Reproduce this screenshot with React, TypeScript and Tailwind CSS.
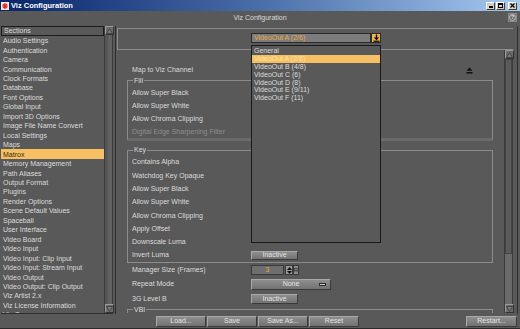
import React from "react";

const sections = [
  "Audio Settings",
  "Authentication",
  "Camera",
  "Communication",
  "Clock Formats",
  "Database",
  "Font Options",
  "Global Input",
  "Import 3D Options",
  "Image File Name Convert",
  "Local Settings",
  "Maps",
  "Matrox",
  "Memory Management",
  "Path Aliases",
  "Output Format",
  "Plugins",
  "Render Options",
  "Scene Default Values",
  "Spaceball",
  "User Interface",
  "Video Board",
  "Video Input",
  "Video Input: Clip Input",
  "Video Input: Stream Input",
  "Video Output",
  "Video Output: Clip Output",
  "Viz Artist 2.x",
  "Viz License Information",
  "Viz One",
];

const channels = [
  "General",
  "VideoOut A (2/6)",
  "VideoOut B (4/8)",
  "VideoOut C (6)",
  "VideoOut D (8)",
  "VideoOut E (9/11)",
  "VideoOut F (11)",
];

const fillRows = ["Allow Super Black", "Allow Super White", "Allow Chroma Clipping"];
const keyRows = [
  "Contains Alpha",
  "Watchdog Key Opaque",
  "Allow Super Black",
  "Allow Super White",
  "Allow Chroma Clipping",
  "Apply Offset",
  "Downscale Luma",
];

function GrayButton({ label, className = "" }: { label: string; className?: string }) {
  return (
    <div
      className={`flex items-center justify-center border border-t-[#a8a8a8] border-l-[#a8a8a8] border-r-[#3a3a3a] border-b-[#3a3a3a] bg-linear-to-b from-[#8e8e8e] to-[#727272] text-[#e4e4e4] ${className}`}
    >
      {label}
    </div>
  );
}

function ArrowBox({ up }: { up: boolean }) {
  return (
    <div className="flex h-[9px] w-[9px] items-center justify-center border border-t-[#9a9a9a] border-l-[#9a9a9a] border-r-[#333] border-b-[#333] bg-[#6c6c6c]">
      <svg width="7" height="6" viewBox="0 0 7 6">
        <polygon
          points={up ? "3.5,0.5 6.5,5.5 0.5,5.5" : "0.5,0.5 6.5,0.5 3.5,5.5"}
          fill="#7a7a7a"
          stroke="#444"
          strokeWidth="1"
        />
      </svg>
    </div>
  );
}

function EjectIcon({ color = "#111" }: { color?: string }) {
  return (
    <svg width="7" height="7" viewBox="0 0 7 7">
      <polygon points="3.5,0.5 6.5,3.8 0.5,3.8" fill={color} />
      <rect x="0.5" y="5" width="6" height="1.5" fill={color} />
    </svg>
  );
}

export default function App() {
  return (
    <div className="flex h-[329px] w-[520px] flex-col overflow-hidden bg-[#595959] font-['Liberation_Sans',Arial,sans-serif] text-[7px] text-[#dcdcdc]">
      {/* title bar */}
      <div className="flex h-[11px] shrink-0 items-center bg-linear-to-r from-[#0a246a] via-[#4a6ea8] to-[#a6caf0] pl-[1px] pr-[3px]">
        <div className="flex h-[8px] w-[8px] items-center justify-center bg-[#f4e8e0]">
          <svg width="8" height="8" viewBox="0 0 8 8">
            <path d="M4 1v6M1 4h6M2 2l4 4M6 2l-4 4" stroke="#d8302a" strokeWidth="1.2" />
          </svg>
        </div>
        <span className="ml-[2px] text-[7.5px] font-bold leading-none text-white">Viz Configuration</span>
        <div className="ml-auto flex gap-[1px]">
          {["min", "max"].map((k) => (
            <div
              key={k}
              className="flex h-[8px] w-[9px] items-center justify-center border border-t-white border-l-white border-r-[#404040] border-b-[#404040] bg-[#d4d0c8]"
            >
              {k === "min" ? (
                <div className="mt-[3px] h-[1.5px] w-[4px] bg-black" />
              ) : (
                <div className="h-[5px] w-[5px] border border-t-[2px] border-black" />
              )}
            </div>
          ))}
          <div className="ml-[2px] flex h-[8px] w-[9px] items-center justify-center border border-t-white border-l-white border-r-[#404040] border-b-[#404040] bg-[#d4d0c8]">
            <svg width="5" height="5" viewBox="0 0 5 5">
              <path d="M0.5 0.5l4 4M4.5 0.5l-4 4" stroke="#000" strokeWidth="1.2" />
            </svg>
          </div>
        </div>
      </div>

      {/* header */}
      <div className="relative flex h-[15px] shrink-0 items-center justify-center">
        <span className="text-[7px]">Viz Configuration</span>
        <div className="absolute right-[3px] top-[2px] flex h-[9px] w-[9px] items-center justify-center border border-[#8a8a8a] bg-[#6e6e6e]">
          <div className="flex h-[7px] w-[7px] items-center justify-center rounded-full border border-[#bcbcbc] text-[5px] font-bold leading-none text-[#e0e0e0]">
            ?
          </div>
        </div>
      </div>

      {/* body */}
      <div className="flex h-[288px] shrink-0">
        {/* sidebar */}
        <div className="ml-[1px] flex w-[112px] border-b border-[#2e2e2e]">
          <div className="flex flex-1 flex-col overflow-hidden">
            <div className="flex h-[10px] shrink-0 items-center border border-[#1c1c1c] pl-[2px]">Sections</div>
            {sections.map((s) => (
              <div
                key={s}
                className={`flex h-[9.46px] shrink-0 items-center pl-[2px] leading-none ${
                  s === "Matrox" ? "bg-[#f6c062] text-[#3a2a10]" : ""
                }`}
              >
                {s}
              </div>
            ))}
          </div>
          <div className="flex w-[9px] flex-col border-x border-[#3a3a3a] bg-[#626262]">
            <ArrowBox up />
            <div className="flex-1 border-l-[3px] border-[#555]" />
            <ArrowBox up={false} />
          </div>
        </div>

        {/* main panel */}
        <div className="ml-[2px] flex w-[403px] flex-col border-x border-[#2e2e2e] pb-[1px]">
          {/* top: channel selector */}
          <div className="mt-[2px] ml-[1px] mr-[4px] h-[22px] shrink-0 border-t border-l border-b border-t-[#8c8c8c] border-l-[#8c8c8c] border-b-[#8c8c8c] pl-[133px] pt-[4px]">
            <div className="relative flex h-[10px] w-[130px]">
              <div className="flex flex-1 items-center border border-[#2a2a2a] bg-[#7c7c7c] pl-[2px] text-[#eaa83a]">
                VideoOut A (2/6)
              </div>
              <div className="flex w-[10px] items-center justify-center border border-[#2a2a2a] bg-[#f2b548]">
                <svg width="7" height="8" viewBox="0 0 7 8">
                  <path d="M3.5 0.5v4.5" stroke="#000" strokeWidth="1.4" />
                  <polygon points="0.8,3.6 6.2,3.6 3.5,6.2" fill="#000" />
                  <rect x="0.5" y="6.6" width="6" height="1.2" fill="#000" />
                </svg>
              </div>
              <div className="absolute left-0 top-[12px] z-10 flex h-[198px] w-[130px] flex-col border border-[#1a1a1a] bg-[#595959] pt-[1px]">
                {channels.map((c, i) => (
                  <div
                    key={c}
                    className={`flex h-[7.8px] items-center pl-[2px] leading-none ${
                      i === 1 ? "bg-[#f6c062] text-[#fbe2a8]" : ""
                    }`}
                  >
                    {c}
                  </div>
                ))}
              </div>
            </div>
          </div>

          {/* lower: settings */}
          <div className="flex h-[263px] shrink-0">
            <div className="flex flex-1 flex-col overflow-hidden pl-[16px] pt-[13.5px]">
              <div className="flex h-[13.3px] shrink-0 items-center">
                <span className="w-[119px] shrink-0">Map to Viz Channel</span>
                <span className="ml-[215px] flex">
                  <EjectIcon />
                </span>
              </div>

              <fieldset className="-ml-[5px] w-[366px] shrink-0 border border-[#8c8c8c] border-b-[3px] border-b-[#6a6a6a] px-[4px] pt-[1.5px]">
                <legend className="ml-[1px] px-[1px] leading-[8px]">Fill</legend>
                {fillRows.map((r) => (
                  <div key={r} className="flex h-[13.3px] items-center">
                    {r}
                  </div>
                ))}
                <div className="flex h-[12.3px] items-center text-[#8e8e8e]">Digital Edge Sharpening Filter</div>
              </fieldset>

              <fieldset className="-ml-[5px] mt-[5px] w-[366px] shrink-0 border border-[#8c8c8c] px-[4px] pt-[1.5px]">
                <legend className="ml-[1px] px-[1px] leading-[8px]">Key</legend>
                {keyRows.map((r) => (
                  <div key={r} className="flex h-[13.3px] items-center">
                    {r}
                  </div>
                ))}
                <div className="flex h-[13.3px] items-center">
                  <span className="w-[119px] shrink-0">Invert Luma</span>
                  <GrayButton label="Inactive" className="h-[9px] w-[47px]" />
                </div>
              </fieldset>

              <div className="flex h-[14px] shrink-0 items-center">
                <span className="w-[119px] shrink-0">Manager Size (Frames)</span>
                <div className="flex h-[10px] w-[33px] items-center justify-center border border-[#3a3a3a] bg-[#6e6e6e] text-[#e6a640]">
                  3
                </div>
                <div className="ml-[1px] flex h-[10px] w-[8px] flex-col items-center justify-center gap-[1px] border border-[#3a3a3a] bg-[#9a9a9a]">
                  <svg width="5" height="3" viewBox="0 0 5 3">
                    <polygon points="2.5,0 5,3 0,3" fill="#111" />
                  </svg>
                  <svg width="5" height="3" viewBox="0 0 5 3">
                    <polygon points="0,0 5,0 2.5,3" fill="#111" />
                  </svg>
                </div>
                <div className="flex h-[10px] w-[6px] items-center justify-center border border-[#3a3a3a] bg-[#8a8a8a] text-[6px] text-[#1a1a1a]">
                  R
                </div>
              </div>
              <div className="flex h-[14.5px] shrink-0 items-center">
                <span className="w-[119px] shrink-0">Repeat Mode</span>
                <div className="relative flex h-[11px] w-[80px] items-center justify-center border border-t-[#a8a8a8] border-l-[#a8a8a8] border-r-[#3a3a3a] border-b-[#3a3a3a] bg-linear-to-b from-[#8e8e8e] to-[#727272] text-[#e4e4e4]">
                  None
                  <div className="absolute right-[4px] top-[3px] h-[3px] w-[7px] border border-[#2a2a2a] bg-[#c8c8c8]" />
                </div>
              </div>
              <div className="flex h-[14px] shrink-0 items-center">
                <span className="w-[119px] shrink-0">3G Level B</span>
                <GrayButton label="Inactive" className="h-[10px] w-[47px]" />
              </div>
              <fieldset className="-ml-[5px] w-[366px] shrink-0 border border-[#8c8c8c] px-[4px]">
                <legend className="ml-[1px] px-[1px] leading-[8px]">VBI</legend>
                <div className="h-[20px]" />
              </fieldset>
            </div>

            {/* scrollbar */}
            <div className="mr-[4px] flex w-[9px] flex-col border-x border-[#3a3a3a] bg-[#6a6a6a]">
              <ArrowBox up />
              <div className="h-[195px] border border-[#444] bg-[#5a5a5a]" />
              <div className="flex-1" />
              <ArrowBox up={false} />
            </div>
          </div>
        </div>
      </div>

      {/* footer */}
      <div className="flex h-[15px] shrink-0 items-start border-b border-[#2a2a2a] pl-[156px] pr-[3px] pt-[2px]">
        <div className="flex gap-[1px]">
          {["Load...", "Save", "Save As...", "Reset"].map((b) => (
            <GrayButton key={b} label={b} className="h-[11px] w-[50px]" />
          ))}
        </div>
        <GrayButton label="Restart..." className="ml-auto h-[11px] w-[51px]" />
      </div>
    </div>
  );
}
